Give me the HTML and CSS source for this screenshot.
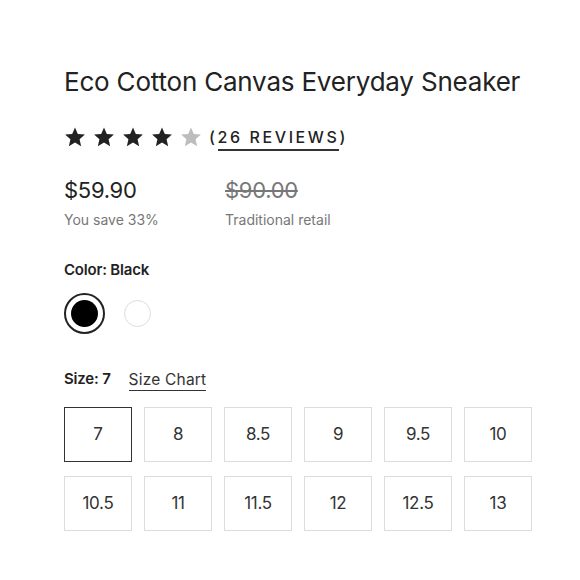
FILE: index.html
```html
<!DOCTYPE html>
<html>
<head>
<meta charset="utf-8">
<link rel="stylesheet" href="styles.css">
</head>
<body>
<div class="product">
  <h1 class="title">Eco Cotton Canvas Everyday Sneaker</h1>
  <div class="rating">
    <div class="stars">
      <svg class="star" viewBox="0 0 24 24"><polygon points="12,1.5 15.1,8.6 22.8,9.3 17,14.4 18.7,22 12,18 5.3,22 7,14.4 1.2,9.3 8.9,8.6"/></svg>
      <svg class="star" viewBox="0 0 24 24"><polygon points="12,1.5 15.1,8.6 22.8,9.3 17,14.4 18.7,22 12,18 5.3,22 7,14.4 1.2,9.3 8.9,8.6"/></svg>
      <svg class="star" viewBox="0 0 24 24"><polygon points="12,1.5 15.1,8.6 22.8,9.3 17,14.4 18.7,22 12,18 5.3,22 7,14.4 1.2,9.3 8.9,8.6"/></svg>
      <svg class="star" viewBox="0 0 24 24"><polygon points="12,1.5 15.1,8.6 22.8,9.3 17,14.4 18.7,22 12,18 5.3,22 7,14.4 1.2,9.3 8.9,8.6"/></svg>
      <svg class="star empty" viewBox="0 0 24 24"><polygon points="12,1.5 15.1,8.6 22.8,9.3 17,14.4 18.7,22 12,18 5.3,22 7,14.4 1.2,9.3 8.9,8.6"/></svg>
    </div>
    <span class="reviews">(<span class="reviews-link">26 REVIEWS</span>)</span>
  </div>
  <div class="prices">
    <div class="price-col">
      <div class="price">$59.90</div>
      <div class="note">You save 33%</div>
    </div>
    <div class="price-col">
      <div class="price old">$90.00</div>
      <div class="note">Traditional retail</div>
    </div>
  </div>
  <div class="label">Color: Black</div>
  <div class="swatches">
    <div class="swatch selected"><span class="dot black"></span></div>
    <div class="swatch"><span class="dot white"></span></div>
  </div>
  <div class="size-head">
    <span class="label inline">Size: 7</span>
    <span class="size-chart">Size Chart</span>
  </div>
  <div class="sizes">
    <div class="size active">7</div>
    <div class="size">8</div>
    <div class="size">8.5</div>
    <div class="size">9</div>
    <div class="size">9.5</div>
    <div class="size">10</div>
    <div class="size">10.5</div>
    <div class="size">11</div>
    <div class="size">11.5</div>
    <div class="size">12</div>
    <div class="size">12.5</div>
    <div class="size">13</div>
  </div>
</div>
</body>
</html>
```
FILE: styles.css
```css
* { box-sizing: border-box; }
body {
  margin: 0;
  background: #fff;
  font-family: Inter, "Noto Sans", "Liberation Sans", sans-serif;
  color: #222;
}
.product {
  width: 468px;
  margin-left: 64px;
  padding-top: 66px;
}
.title {
  margin: 0;
  font-size: 26px;
  line-height: 32px;
  font-weight: 400;
  letter-spacing: -0.2px;
  color: #222;
  white-space: nowrap;
}
.rating {
  margin-top: 28px;
  display: flex;
  align-items: center;
  height: 22px;
}
.stars {
  display: flex;
  gap: 7px;
}
.star {
  width: 22px;
  height: 22px;
  fill: #222;
  display: block;
}
.star.empty { fill: #bdbdbd; }
.reviews {
  margin-left: 7px;
  font-size: 16px;
  letter-spacing: 2.6px;
  font-weight: 500;
  color: #222;
  line-height: 22px;
}
.reviews-link {
  border-bottom: 2px solid #333;
  padding-bottom: 2px;
}
.prices {
  margin-top: 28px;
  display: flex;
}
.price-col { width: 161px; }
.price {
  font-size: 22px;
  line-height: 28px;
  color: #222;
  letter-spacing: -0.3px;
}
.price.old {
  color: #777;
  text-decoration: line-through;
  text-decoration-thickness: 1.5px;
}
.note {
  margin-top: 6px;
  font-size: 14px;
  line-height: 20px;
  color: #777;
  letter-spacing: 0;
}
.label {
  margin-top: 30px;
  font-size: 15px;
  line-height: 20px;
  font-weight: 600;
  color: #222;
  letter-spacing: -0.2px;
}
.label.inline { margin-top: 0; }
.swatches {
  margin-top: 13px;
  display: flex;
  gap: 12px;
}
.swatch {
  width: 41px;
  height: 41px;
  border-radius: 50%;
  display: flex;
  align-items: center;
  justify-content: center;
}
.swatch.selected { border: 2px solid #222; }
.dot {
  width: 27px;
  height: 27px;
  border-radius: 50%;
  display: block;
}
.dot.black { background: #000; }
.dot.white { background: #fff; border: 1.5px solid #dcdcdc; }
.size-head {
  margin-top: 35px;
  display: flex;
  gap: 18px;
  line-height: 20px;
}
.size-chart {
  font-size: 15.5px;
  color: #333;
  border-bottom: 1.5px solid #333;
  line-height: 21px;
  letter-spacing: 0.2px;
}
.sizes {
  margin-top: 15.5px;
  display: grid;
  grid-template-columns: repeat(6, 1fr);
  column-gap: 12px;
  row-gap: 14px;
}
.size {
  height: 55px;
  border: 1.5px solid #dcdcdc;
  display: flex;
  align-items: center;
  justify-content: center;
  font-size: 17px;
  color: #333;
  letter-spacing: -0.3px;
}
.size.active { border: 1.5px solid #333; }
```
